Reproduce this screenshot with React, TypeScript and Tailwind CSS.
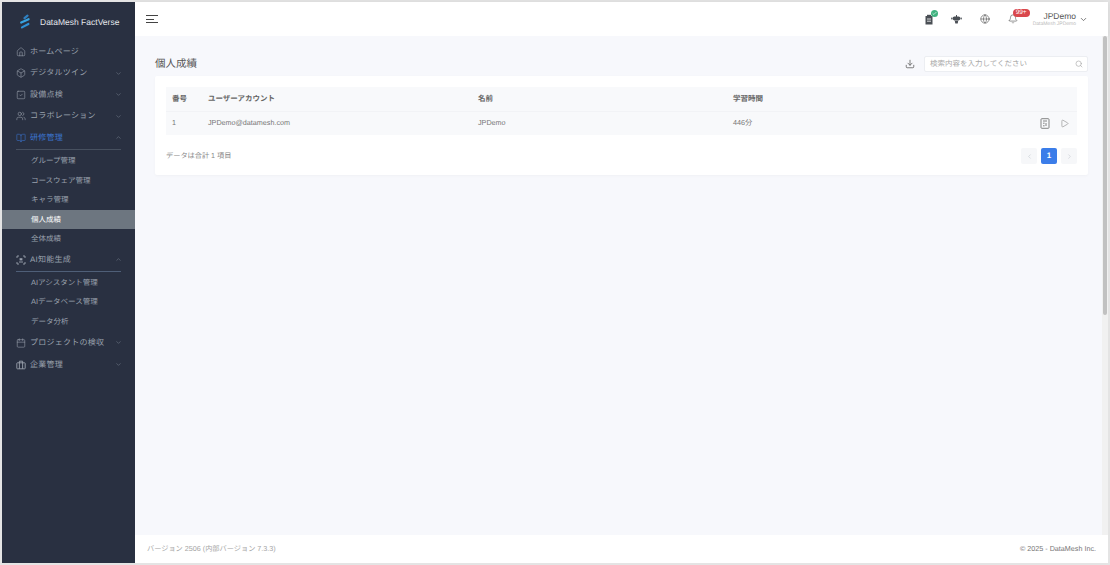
import React from 'react';
import {
  Home,
  Box,
  SquareCheck,
  Users,
  BookOpen,
  Calendar,
  ChevronDown,
  ChevronUp,
  ChevronLeft,
  ChevronRight,
  Download,
  Search,
  Globe,
  Bell,
  Play,
  Check,
} from 'lucide-react';

const font = { fontFamily: '"Liberation Sans", "Noto Sans CJK JP", sans-serif' };

const AiIcon = ({ size = 10 }: { size?: number }) => (
  <svg width={size} height={size} viewBox="0 0 10 10" fill="none" stroke="currentColor" strokeWidth="0.9">
    <path d="M1 3V1h2M7 1h2v2M9 7v2H7M3 9H1V7" />
    <rect x="3.6" y="3.2" width="2.8" height="2.2" fill="currentColor" stroke="none" />
    <path d="M3 7h4" />
  </svg>
);

const Briefcase = ({ size = 10 }: { size?: number }) => (
  <svg width={size} height={size} viewBox="0 0 10 10" fill="none" stroke="currentColor" strokeWidth="0.9">
    <rect x="0.8" y="2.8" width="8.4" height="6" rx="0.6" />
    <path d="M3.4 8.8V1.2h3.2v7.6" />
  </svg>
);

const ClipboardFilled = () => (
  <svg width="10" height="11" viewBox="0 0 10 11">
    <path d="M1.5 2h7v8.5h-7z" fill="#4a4f55" />
    <rect x="3" y="0.8" width="4" height="2.2" fill="#4a4f55" />
    <path d="M3 5h4M3 7.2h4" stroke="#fff" strokeWidth="0.8" />
  </svg>
);

const RobotFilled = () => (
  <svg width="11" height="11" viewBox="0 0 11 11">
    <rect x="5" y="1" width="1" height="2" fill="#4a4f55" />
    <rect x="1.6" y="2.6" width="7.8" height="3.8" rx="1.8" fill="#4a4f55" />
    <rect x="0.2" y="3.6" width="1.2" height="1.8" fill="#4a4f55" />
    <rect x="9.6" y="3.6" width="1.2" height="1.8" fill="#4a4f55" />
    <path d="M3.8 6.8h3.4l-.5 2.8h-2.4z" fill="#4a4f55" />
  </svg>
);

const ReportIcon = () => (
  <svg width="10" height="11" viewBox="0 0 10 11" fill="none" stroke="currentColor" strokeWidth="0.9">
    <rect x="1" y="0.7" width="8" height="9.6" rx="0.8" />
    <path d="M3 3h4M3 5.2h1.6M6 5v3M3 7.8h1.6" />
  </svg>
);

const MenuRow = ({ icon: Icon, label, arrow, active }: { icon: React.ElementType; label: string; arrow?: 'up' | 'down'; active?: boolean }) => (
  <div className={`flex h-[21.5px] items-center pl-[14px] pr-[13px] ${active ? 'text-[#3b74cf]' : 'text-[#9aa1ad]'}`}>
    <Icon size={10} strokeWidth={1.4} className="shrink-0" />
    <span className="ml-[4px] flex-1 text-[8px] tracking-[0.25px] whitespace-nowrap">{label}</span>
    {arrow === 'down' && <ChevronDown size={7} className="text-[#6f7887]" />}
    {arrow === 'up' && <ChevronUp size={7} className="text-[#6f7887]" />}
  </div>
);

const SubRow = ({ label, active }: { label: string; active?: boolean }) => (
  <div className={`flex h-[19.5px] items-center pl-[29px] text-[7.5px] whitespace-nowrap ${active ? 'bg-[#6d7680] text-white' : 'text-[#9aa1ad]'}`}>
    {label}
  </div>
);

const Logo = () => (
  <svg width="14" height="16" viewBox="0 0 14 16" fill="none" strokeLinecap="round">
    <path d="M6.5 4.2 L9.5 1.6" stroke="#2f7fc0" strokeWidth="2.2" />
    <path d="M3.2 8.6 L10.6 5.2" stroke="#38a3df" strokeWidth="2.2" />
    <path d="M4 13.4 L10.4 10" stroke="#2f92d6" strokeWidth="2.2" />
  </svg>
);

const Sidebar = () => (
  <aside className="flex w-[133px] shrink-0 flex-col bg-[#293041]">
    <div className="flex h-[40px] items-center pl-[16px]">
      <Logo />
      <span className="ml-[8px] text-[8.5px] whitespace-nowrap text-[#e4e7ec]">DataMesh FactVerse</span>
    </div>
    <div className="mt-[-1px]">
      <MenuRow icon={Home} label="ホームページ" />
      <MenuRow icon={Box} label="デジタルツイン" arrow="down" />
      <MenuRow icon={SquareCheck} label="設備点検" arrow="down" />
      <MenuRow icon={Users} label="コラボレーション" arrow="down" />
      <MenuRow icon={BookOpen} label="研修管理" arrow="up" active />
      <div className="mx-[14px] mb-[1px] mt-[0.5px] h-px bg-[#47505f]" />
      <SubRow label="グループ管理" />
      <SubRow label="コースウェア管理" />
      <SubRow label="キャラ管理" />
      <SubRow label="個人成績" active />
      <SubRow label="全体成績" />
      <div className="mt-[0.5px]">
        <MenuRow icon={AiIcon} label="AI知能生成" arrow="up" />
      </div>
      <div className="mx-[14px] mb-[1px] h-px bg-[#4f5f78]" />
      <SubRow label="AIアシスタント管理" />
      <SubRow label="AIデータベース管理" />
      <SubRow label="データ分析" />
      <div className="mt-[1px]">
        <MenuRow icon={Calendar} label="プロジェクトの検収" arrow="down" />
      </div>
      <div className="mt-[0.5px]">
        <MenuRow icon={Briefcase} label="企業管理" arrow="down" />
      </div>
    </div>
  </aside>
);

const Header = () => (
  <header className="flex h-[34px] shrink-0 items-center bg-white pl-[11px] pr-[20px] shadow-[0_1px_6px_rgba(0,0,0,0.08)]">
    <div className="flex flex-col gap-[2.5px]">
      <div className="h-px w-[12px] bg-[#444]" />
      <div className="h-px w-[8px] bg-[#444]" />
      <div className="h-px w-[12px] bg-[#444]" />
    </div>
    <div className="ml-auto flex items-center text-[#555]">
      <div className="relative">
        <ClipboardFilled />
        <span className="absolute -right-[4px] -top-[4px] flex h-[7px] w-[7px] items-center justify-center rounded-full bg-[#3fb27f]">
          <Check size={5} strokeWidth={3} className="text-white" />
        </span>
      </div>
      <div className="ml-[17px]">
        <RobotFilled />
      </div>
      <Globe size={10} strokeWidth={1.5} className="ml-[18px]" />
      <div className="relative ml-[18px]">
        <Bell size={10} strokeWidth={1.5} />
        <span className="absolute -top-[5px] left-[5px] rounded-full bg-[#d9474c] px-[3px] text-[6.5px] leading-[8px] text-white">99+</span>
      </div>
      <div className="ml-[15px] flex flex-col items-end">
        <span className="text-[8.5px] leading-[10px] text-[#555]">JPDemo</span>
        <span className="text-[5px] leading-[7px] text-[#bbb]">DataMesh JPDemo</span>
      </div>
      <ChevronDown size={9} className="ml-[3px]" />
    </div>
  </header>
);

const Content = () => (
  <div className="flex-1 bg-[#f7f8fc] px-[20px]">
    <div className="flex h-[40px] items-center pt-[16px]">
      <h1 className="mt-[1px] text-[10.5px] text-[#555]">個人成績</h1>
      <Download size={10} className="ml-auto text-[#666]" />
      <div className="ml-[9px] flex h-[16px] w-[164px] items-center justify-between rounded-[2px] border border-[#eceef2] bg-white pl-[5px] pr-[4px]">
        <span className="text-[7.5px] text-[#a8a8a8]">検索内容を入力してください</span>
        <Search size={8} className="text-[#aaa]" />
      </div>
    </div>
    <div className="rounded-[2px] bg-white px-[11px] pt-[11px] pb-[11px] shadow-[0_1px_3px_rgba(0,0,0,0.03)]">
      <div className="flex h-[24px] items-center bg-[#f8f9fb] text-[7.5px] font-bold text-[#666]">
        <span className="w-[42px] pl-[6px]">番号</span>
        <span className="w-[270px]">ユーザーアカウント</span>
        <span className="w-[255px]">名前</span>
        <span>学習時間</span>
      </div>
      <div className="flex h-[24px] items-center border-t border-[#f2f3f6] bg-[#f8f9fb] text-[7.2px] text-[#777]">
        <span className="w-[42px] pl-[6px]">1</span>
        <span className="w-[270px]">JPDemo@datamesh.com</span>
        <span className="w-[255px]">JPDemo</span>
        <span>446分</span>
        <div className="ml-auto flex items-center gap-[10px] pr-[8px] text-[#777]">
          <ReportIcon />
          <Play size={9} strokeWidth={1.4} />
        </div>
      </div>
      <div className="mt-[13px] flex items-center">
        <span className="text-[7.2px] text-[#888]">データは合計 1 項目</span>
        <div className="ml-auto flex items-center gap-[4px]">
          <div className="flex h-[16px] w-[16px] items-center justify-center rounded-[2px] bg-[#f6f7f9] text-[#c5c8ce]">
            <ChevronLeft size={7} />
          </div>
          <div className="flex h-[16px] w-[16px] items-center justify-center rounded-[2px] bg-[#3b7de9] text-[8px] font-bold text-white">
            1
          </div>
          <div className="flex h-[16px] w-[16px] items-center justify-center rounded-[2px] bg-[#f6f7f9] text-[#c5c8ce]">
            <ChevronRight size={7} />
          </div>
        </div>
      </div>
    </div>
  </div>
);

const Footer = () => (
  <footer className="flex h-[28px] shrink-0 items-center justify-between bg-white pl-[12px] pr-[12px] text-[7.2px]">
    <span className="text-[#a5a5a5]">バージョン 2506 (内部バージョン 7.3.3)</span>
    <span className="text-[#777]">© 2025 - DataMesh Inc.</span>
  </footer>
);

export default function App() {
  return (
    <div className="flex h-[565px] w-[1110px] overflow-hidden bg-[#e4e4e4] p-[2px] antialiased [text-rendering:geometricPrecision]" style={font}>
      <Sidebar />
      <main className="relative flex min-w-0 flex-1 flex-col">
        <Header />
        <Content />
        <Footer />
        <div className="absolute right-[0px] top-[34px] h-[499px] w-[6px] bg-[#f1f1f1]">
          <div className="mx-auto h-[279px] w-[4px] rounded-[2px] bg-[#c1c1c1]" />
        </div>
      </main>
    </div>
  );
}
